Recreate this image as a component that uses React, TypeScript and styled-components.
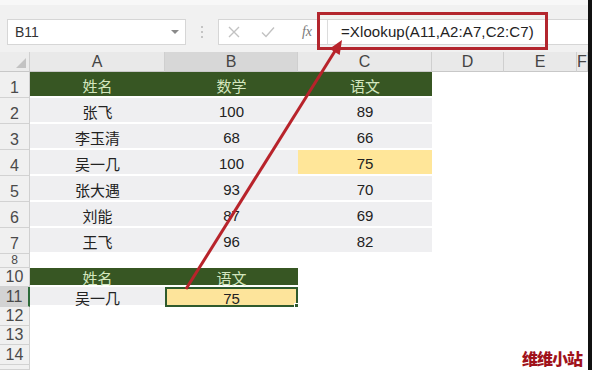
import React from 'react';
import styled, { createGlobalStyle } from 'styled-components';

const GlobalStyle = createGlobalStyle`
  body {
    margin: 0;
    background: #ffffff;
    font-family: "Liberation Sans", "Noto Sans CJK SC", sans-serif;
  }
`;

const Page = styled.div`
  position: relative;
  width: 592px;
  height: 370px;
  overflow: hidden;
  display: flex;
  background: #ffffff;
`;

const Main = styled.div`
  width: 588px;
  display: flex;
  flex-direction: column;
`;

const EdgeBar = styled.div`
  width: 4px;
  background: #111;
`;

const Toolbar = styled.div`
  flex-shrink: 0;
  height: 52px;
  box-sizing: border-box;
  background: #f1f1f1;
  border-top: 5px solid #f8f8f8;
  display: flex;
  align-items: center;
  padding: 6px 0 0 7px;
`;

const NameBox = styled.div`
  width: 179px;
  height: 26px;
  box-sizing: border-box;
  background: #fff;
  border: 1px solid #d6d6d6;
  display: flex;
  align-items: center;
  justify-content: space-between;
  padding: 0 6px 0 7px;
  font-size: 14px;
  color: #333;
`;

const Caret = styled.span`
  width: 0;
  height: 0;
  border-left: 4px solid transparent;
  border-right: 4px solid transparent;
  border-top: 4px solid #8a8a8a;
`;

const Dots = styled.div`
  width: 32px;
  display: flex;
  flex-direction: column;
  align-items: center;
  gap: 3px;
  span {
    width: 2px;
    height: 2px;
    background: #c4c4c4;
  }
`;

const FormulaBar = styled.div`
  flex: 1;
  height: 26px;
  box-sizing: border-box;
  background: #fff;
  border: 1px solid #d6d6d6;
  border-right: none;
  display: flex;
  align-items: center;
`;

const IconBtn = styled.span<{ $w: number }>`
  width: ${(p) => p.$w}px;
  display: flex;
  justify-content: center;
  align-items: center;
`;

const Fx = styled.span`
  width: 40px;
  text-align: center;
  font-family: "Liberation Serif", serif;
  font-style: italic;
  font-size: 14px;
  color: #7a7a7a;
  border-right: 1px solid #dcdcdc;
  height: 24px;
  line-height: 24px;
`;

const FormulaText = styled.span`
  padding-left: 13px;
  font-size: 15px;
  color: #222;
  letter-spacing: 0.1px;
`;

const Sheet = styled.div`
  display: grid;
  grid-template-columns: 30px 135px 133px 134px 72px 73px 11px;
  grid-template-rows: 20px repeat(7, 26px) 14px 19px 20px 19px 19px 20px 1fr;
  flex: 1;
  min-height: 0;
  overflow: hidden;
`;

const Corner = styled.div`
  background: #ececec;
  border-right: 1px solid #d0d0d0;
  border-bottom: 1px solid #c8c8c8;
  position: relative;
  &::after {
    content: '';
    position: absolute;
    right: 3px;
    bottom: 3px;
    border-left: 10px solid transparent;
    border-bottom: 10px solid #c3c3c3;
  }
`;

const ColHead = styled.div<{ $active?: boolean }>`
  background: ${(p) => (p.$active ? '#d7d7d7' : '#e9e9e9')};
  border-right: 1px solid #cfcfcf;
  border-bottom: 1px solid #c8c8c8;
  display: flex;
  align-items: center;
  justify-content: center;
  font-size: 16px;
  line-height: 16px;
  color: #444;
`;

const RowHead = styled.div<{ $active?: boolean; $short?: boolean }>`
  background: ${(p) => (p.$active ? '#d3d3d3' : '#f0f0f0')};
  border-bottom: 1px solid #d2d2d2;
  border-right: ${(p) => (p.$active ? '2px solid #2e6b3a' : '1px solid #d0d0d0')};
  display: flex;
  align-items: ${(p) => (p.$short ? 'center' : 'flex-end')};
  justify-content: center;
  font-size: ${(p) => (p.$short ? '12px' : '16px')};
  line-height: ${(p) => (p.$short ? '13px' : '18px')};
  color: #4a4a4a;
  overflow: hidden;
`;

type Kind = 'head' | 'data' | 'hl' | 'plain' | 'sel';

const fills: Record<Kind, string> = {
  head: '#375623',
  data: '#efeff1',
  hl: '#ffe699',
  plain: '#ffffff',
  sel: '#fde49b',
};

const Cell = styled.div<{ $kind: Kind }>`
  position: relative;
  background: ${(p) => fills[p.$kind]};
  border-bottom: ${(p) => (p.$kind === 'plain' || p.$kind === 'sel' ? 'none' : '2px solid #ffffff')};
  box-shadow: ${(p) => (p.$kind === 'sel' ? 'inset 0 0 0 2px #2f5a2c' : 'none')};
  display: flex;
  align-items: center;
  justify-content: center;
  padding-top: 2px;
  font-size: 15px;
  color: ${(p) => (p.$kind === 'head' ? '#d3e6be' : '#222')};
  &::after {
    content: '';
    display: ${(p) => (p.$kind === 'sel' ? 'block' : 'none')};
    position: absolute;
    right: -3px;
    bottom: -3px;
    width: 5px;
    height: 5px;
    background: #2f5a2c;
    border: 1px solid #fff;
  }
`;

const RedBox = styled.div`
  position: absolute;
  left: 317px;
  top: 12px;
  width: 231px;
  height: 38px;
  box-sizing: border-box;
  border: 3px solid #b3262e;
`;

const Overlay = styled.svg`
  position: absolute;
  left: 0;
  top: 0;
  pointer-events: none;
`;

const Watermark = styled.div`
  position: absolute;
  left: 522px;
  top: 346px;
  font-family: "Noto Sans CJK SC", serif;
  font-weight: 900;
  font-size: 16px;
  color: #a0121b;
  letter-spacing: -1px;
`;

const cols = ['A', 'B', 'C', 'D', 'E', 'F'];

const rows: { n: string; cells: [string, string, string]; kinds: [Kind, Kind, Kind] }[] = [
  { n: '1', cells: ['姓名', '数学', '语文'], kinds: ['head', 'head', 'head'] },
  { n: '2', cells: ['张飞', '100', '89'], kinds: ['data', 'data', 'data'] },
  { n: '3', cells: ['李玉清', '68', '66'], kinds: ['data', 'data', 'data'] },
  { n: '4', cells: ['吴一几', '100', '75'], kinds: ['data', 'data', 'hl'] },
  { n: '5', cells: ['张大遇', '93', '70'], kinds: ['data', 'data', 'data'] },
  { n: '6', cells: ['刘能', '87', '69'], kinds: ['data', 'data', 'data'] },
  { n: '7', cells: ['王飞', '96', '82'], kinds: ['data', 'data', 'data'] },
  { n: '8', cells: ['', '', ''], kinds: ['plain', 'plain', 'plain'] },
  { n: '10', cells: ['姓名', '语文', ''], kinds: ['head', 'head', 'plain'] },
  { n: '11', cells: ['吴一几', '75', ''], kinds: ['data', 'sel', 'plain'] },
  { n: '12', cells: ['', '', ''], kinds: ['plain', 'plain', 'plain'] },
  { n: '13', cells: ['', '', ''], kinds: ['plain', 'plain', 'plain'] },
  { n: '14', cells: ['', '', ''], kinds: ['plain', 'plain', 'plain'] },
  { n: '', cells: ['', '', ''], kinds: ['plain', 'plain', 'plain'] },
];

const App: React.FC = () => {
  return (
    <Page>
      <GlobalStyle />
      <Main>
        <Toolbar>
          <NameBox>
            B11
            <Caret />
          </NameBox>
          <Dots>
            <span />
            <span />
            <span />
          </Dots>
          <FormulaBar>
            <IconBtn $w={30}>
              <svg width="12" height="12" viewBox="0 0 12 12">
                <path d="M1 1 L11 11 M11 1 L1 11" stroke="#c2c2c2" strokeWidth="1.4" />
              </svg>
            </IconBtn>
            <IconBtn $w={38}>
              <svg width="14" height="12" viewBox="0 0 14 12">
                <path d="M1 6.5 L5 10.5 L13 1.5" stroke="#c2c2c2" strokeWidth="1.4" fill="none" />
              </svg>
            </IconBtn>
            <Fx>fx</Fx>
            <FormulaText>=Xlookup(A11,A2:A7,C2:C7)</FormulaText>
          </FormulaBar>
        </Toolbar>
        <Sheet>
          <Corner />
          {cols.map((c) => (
            <ColHead key={c} $active={c === 'B'}>
              {c}
            </ColHead>
          ))}
          {rows.map((r, idx) => (
            <React.Fragment key={idx}>
              <RowHead $active={r.n === '11'} $short={r.n === '8'}>
                {r.n}
              </RowHead>
              {r.cells.map((t, i) => (
                <Cell key={i} $kind={r.kinds[i]}>
                  {t}
                </Cell>
              ))}
              <Cell $kind="plain" />
              <Cell $kind="plain" />
              <Cell $kind="plain" />
            </React.Fragment>
          ))}
        </Sheet>
      </Main>
      <EdgeBar />
      <RedBox />
      <Overlay width="592" height="370" viewBox="0 0 592 370">
        <line x1="186" y1="289" x2="335" y2="51" stroke="#b8232b" strokeWidth="3" />
        <polygon points="342,40 339.7,55.1 329.5,48.7" fill="#b8232b" />
      </Overlay>
      <Watermark>维维小站</Watermark>
    </Page>
  );
};

export default App;
